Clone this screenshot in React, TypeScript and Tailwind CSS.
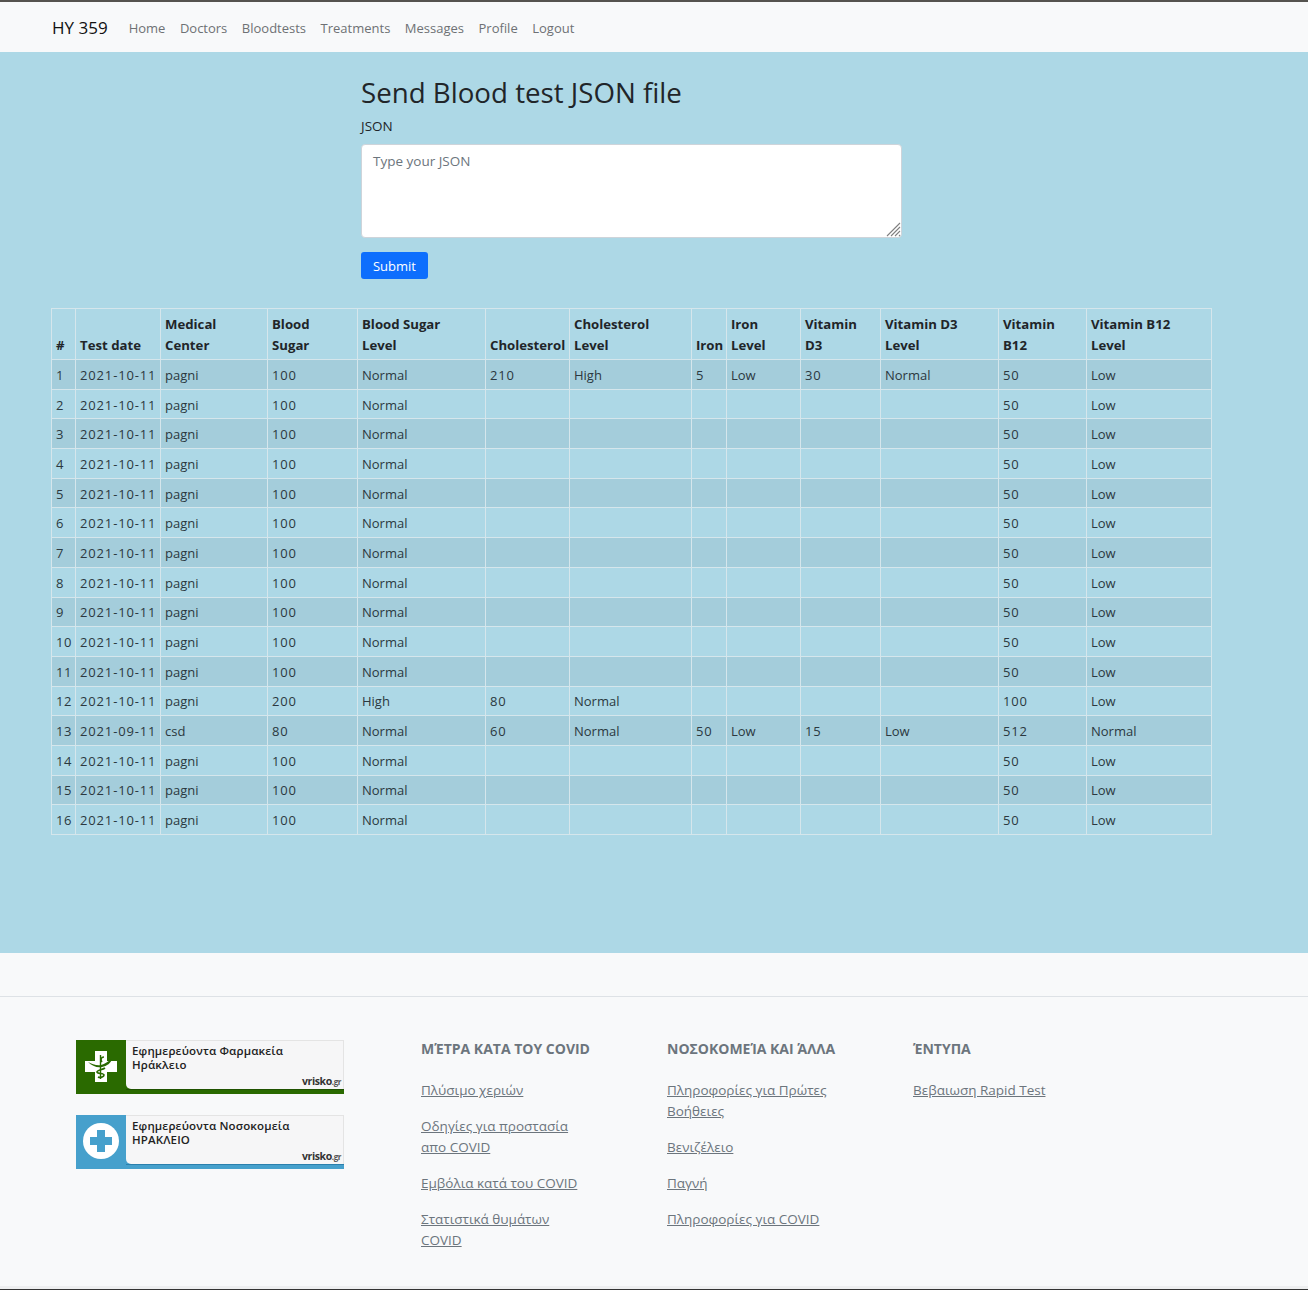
import React from "react";

const columns = [
  { label: "#", width: "w-[24px]" },
  { label: "Test date", width: "w-[85px]" },
  { label: "Medical Center", width: "w-[107px]" },
  { label: "Blood\nSugar", width: "w-[90px]" },
  { label: "Blood Sugar\nLevel", width: "w-[128px]" },
  { label: "Cholesterol", width: "w-[84px]" },
  { label: "Cholesterol Level", width: "w-[122px]" },
  { label: "Iron", width: "w-[35px]" },
  { label: "Iron Level", width: "w-[74px]" },
  { label: "Vitamin D3", width: "w-[80px]" },
  { label: "Vitamin D3 Level", width: "w-[118px]" },
  { label: "Vitamin B12", width: "w-[88px]" },
  { label: "Vitamin B12 Level", width: "w-[125px]" },
];

const std = ["2021-10-11", "pagni", "100", "Normal", "", "", "", "", "", "", "50", "Low"];

const rows: string[][] = [
  ["2021-10-11", "pagni", "100", "Normal", "210", "High", "5", "Low", "30", "Normal", "50", "Low"],
  std, std, std, std, std, std, std, std, std, std,
  ["2021-10-11", "pagni", "200", "High", "80", "Normal", "", "", "", "", "100", "Low"],
  ["2021-09-11", "csd", "80", "Normal", "60", "Normal", "50", "Low", "15", "Low", "512", "Normal"],
  std, std, std,
];

const navLinks = ["Home", "Doctors", "Bloodtests", "Treatments", "Messages", "Profile", "Logout"];

function Banner({ tone, strip, line1, line2, children }: { tone: string; strip: string; line1: string; line2: string; children: React.ReactNode }) {
  return (
    <div className={`w-[268px] h-[54px] flex relative ${tone}`}>
      <div className="w-[50px] h-[52px] flex items-center justify-center shrink-0">{children}</div>
      <div className="flex-1 h-[49px] bg-[#f6f6f7] border-t border-r border-[#e4e4e4] rounded-bl-[5px] pl-[6px] pt-[3px] text-[11.5px] leading-[14px] text-[#222] tracking-[0.15px] font-semibold">
        <div>{line1}</div>
        <div>{line2}</div>
      </div>
      <div className="absolute right-[3px] bottom-[8px] text-[10.5px] leading-none font-bold text-[#333] tracking-[-0.4px]">
        vrisko<span className="text-[8px] text-[#555]">.gr</span>
      </div>
      <div className={`absolute left-[50px] right-0 bottom-[4px] h-px ${strip}`} />
    </div>
  );
}

function FooterColumn({ title, width, links }: { title: string; width: string; links: string[] }) {
  return (
    <div className={`${width} shrink-0`}>
      <h5 className="text-[14px] leading-[21px] font-bold text-[#6c757d] mb-[21px] whitespace-nowrap">{title}</h5>
      <ul className="flex flex-col gap-[15px]">
        {links.map((link) => (
          <li key={link} className="text-[13.5px] leading-[21px]">
            <a href="#" className="text-[#6c757d] underline">{link}</a>
          </li>
        ))}
      </ul>
    </div>
  );
}

export default function App() {
  return (
    <div className="min-h-[1290px] flex flex-col bg-[#f8f9fa] text-[#212529] text-[14px] font-['Open_Sans',sans-serif]">
      <nav className="h-[52px] border-t-2 border-[#55534f] bg-[#f8f9fa] flex items-center pl-[52px] pt-[2px]">
        <span className="text-[17px] text-[#111] mr-[21px]">HY 359</span>
        <div className="flex gap-[14.5px] pt-[2px] text-[13px] text-[#6e7174]">
          {navLinks.map((link) => (
            <a key={link} href="#">{link}</a>
          ))}
        </div>
      </nav>

      <main className="h-[901px] bg-[#add8e6]">
        <section className="w-[540px] ml-[361px] pt-[19px]">
          <h1 className="text-[27.7px] leading-[42px] text-[#212529]">Send Blood test JSON file</h1>
          <label className="block text-[13.5px] leading-[21px] mt-[3px] mb-[7px]">JSON</label>
          <div className="relative w-[541px]">
            <textarea
              placeholder="Type your JSON"
              className="block w-full h-[94px] resize-none bg-white border border-[#ced4da] rounded-[4px] px-[11px] py-[6px] text-[13.5px] leading-[21px] placeholder:text-[#6c757d]"
            />
            <svg className="absolute right-[1px] bottom-[1px] pointer-events-none" width="15" height="15" viewBox="0 0 15 15">
              <path d="M1 14 14 1M5 14 14 5M9 14 14 9M13 14 14 13" stroke="#808080" strokeWidth="1.1" fill="none" />
            </svg>
          </div>
          <button className="block mt-[14px] w-[67px] h-[27px] pt-[2px] bg-[#0d6efd] rounded-[3px] text-white text-[13px]">Submit</button>
        </section>

        <table className="ml-[51px] mt-[29px] w-[1160px] table-fixed border-collapse text-[13px] leading-[21px]">
          <colgroup>
            {columns.map((col) => (
              <col key={col.label} className={col.width} />
            ))}
          </colgroup>
          <thead>
            <tr className="h-[51px]">
              {columns.map((col) => (
                <th key={col.label} className="border border-[#d5e6ec] px-[4px] pb-[3px] align-bottom text-left font-bold text-[13.2px] whitespace-pre-line">
                  {col.label}
                </th>
              ))}
            </tr>
          </thead>
          <tbody>
            {rows.map((row, i) => (
              <tr key={i} className={`h-[29.7px] ${i % 2 === 0 ? "bg-[#a4cddb]" : ""}`}>
                <td className="border border-[#d5e6ec] px-[4px] pt-[2px] text-[#2b3840] tracking-[0.5px]">{i + 1}</td>
                {row.map((cell, j) => (
                  <td key={j} className={`border border-[#d5e6ec] px-[4px] pt-[2px] text-[#2b3840] whitespace-nowrap ${/^[\d-]+$/.test(cell) ? "tracking-[0.85px]" : ""}`}>{cell}</td>
                ))}
              </tr>
            ))}
          </tbody>
        </table>
      </main>

      <div className="h-[44px] border-b border-[#dee2e6]" />

      <footer className="flex-1 flex pt-[41px] pl-[76px]">
        <div className="w-[345px] shrink-0 flex flex-col gap-[21px] mt-[2px]">
          <Banner tone="bg-[#2a6a00]" strip="bg-[#1f5200]" line1="Εφημερεύοντα Φαρμακεία" line2="Ηράκλειο">
            <svg width="32" height="31" viewBox="0 0 32 31">
              <path d="M10 0h12v10h10v11H22v10H10V21H0V10h10z" fill="#fff" />
              <path d="M3 11c4 2 9 4 13 3 4-1 7-4 11-6-1 4-5 7-10 8-5 1-10-1-14-5z" fill="#2a6a00" />
              <path d="M15.5 4v24" stroke="#2a6a00" strokeWidth="1.4" fill="none" />
              <path d="M19 6c-3 0-4 3-2 5M20 17c-3 2-8 2-8 4s7 1 7 3-4 3-6 2" stroke="#2a6a00" strokeWidth="1.7" fill="none" />
            </svg>
          </Banner>
          <Banner tone="bg-[#46a0cc]" strip="bg-[#2b80ad]" line1="Εφημερεύοντα Νοσοκομεία" line2="ΗΡΑΚΛΕΙΟ">
            <svg width="36" height="36" viewBox="0 0 36 36">
              <circle cx="18" cy="18" r="18" fill="#fff" />
              <path d="M14 7h8v7h7v8h-7v7h-8v-7H7v-8h7z" fill="#46a0cc" />
            </svg>
          </Banner>
        </div>
        <FooterColumn
          title="ΜΈΤΡΑ ΚΑΤΑ ΤΟΥ COVID"
          width="w-[246px] pr-[80px]"
          links={["Πλύσιμο χεριών", "Οδηγίες για προστασία απο COVID", "Εμβόλια κατά του COVID", "Στατιστικά θυμάτων COVID"]}
        />
        <FooterColumn
          title="ΝΟΣΟΚΟΜΕΊΑ ΚΑΙ ΆΛΛΑ"
          width="w-[246px] pr-[70px]"
          links={["Πληροφορίες για Πρώτες Βοήθειες", "Βενιζέλειο", "Παγνή", "Πληροφορίες για COVID"]}
        />
        <FooterColumn title="ΈΝΤΥΠΑ" width="w-[200px]" links={["Βεβαιωση Rapid Test"]} />
      </footer>
      <div className="h-[4px] bg-[#eeeff0] border-b border-[#333]" />
    </div>
  );
}
